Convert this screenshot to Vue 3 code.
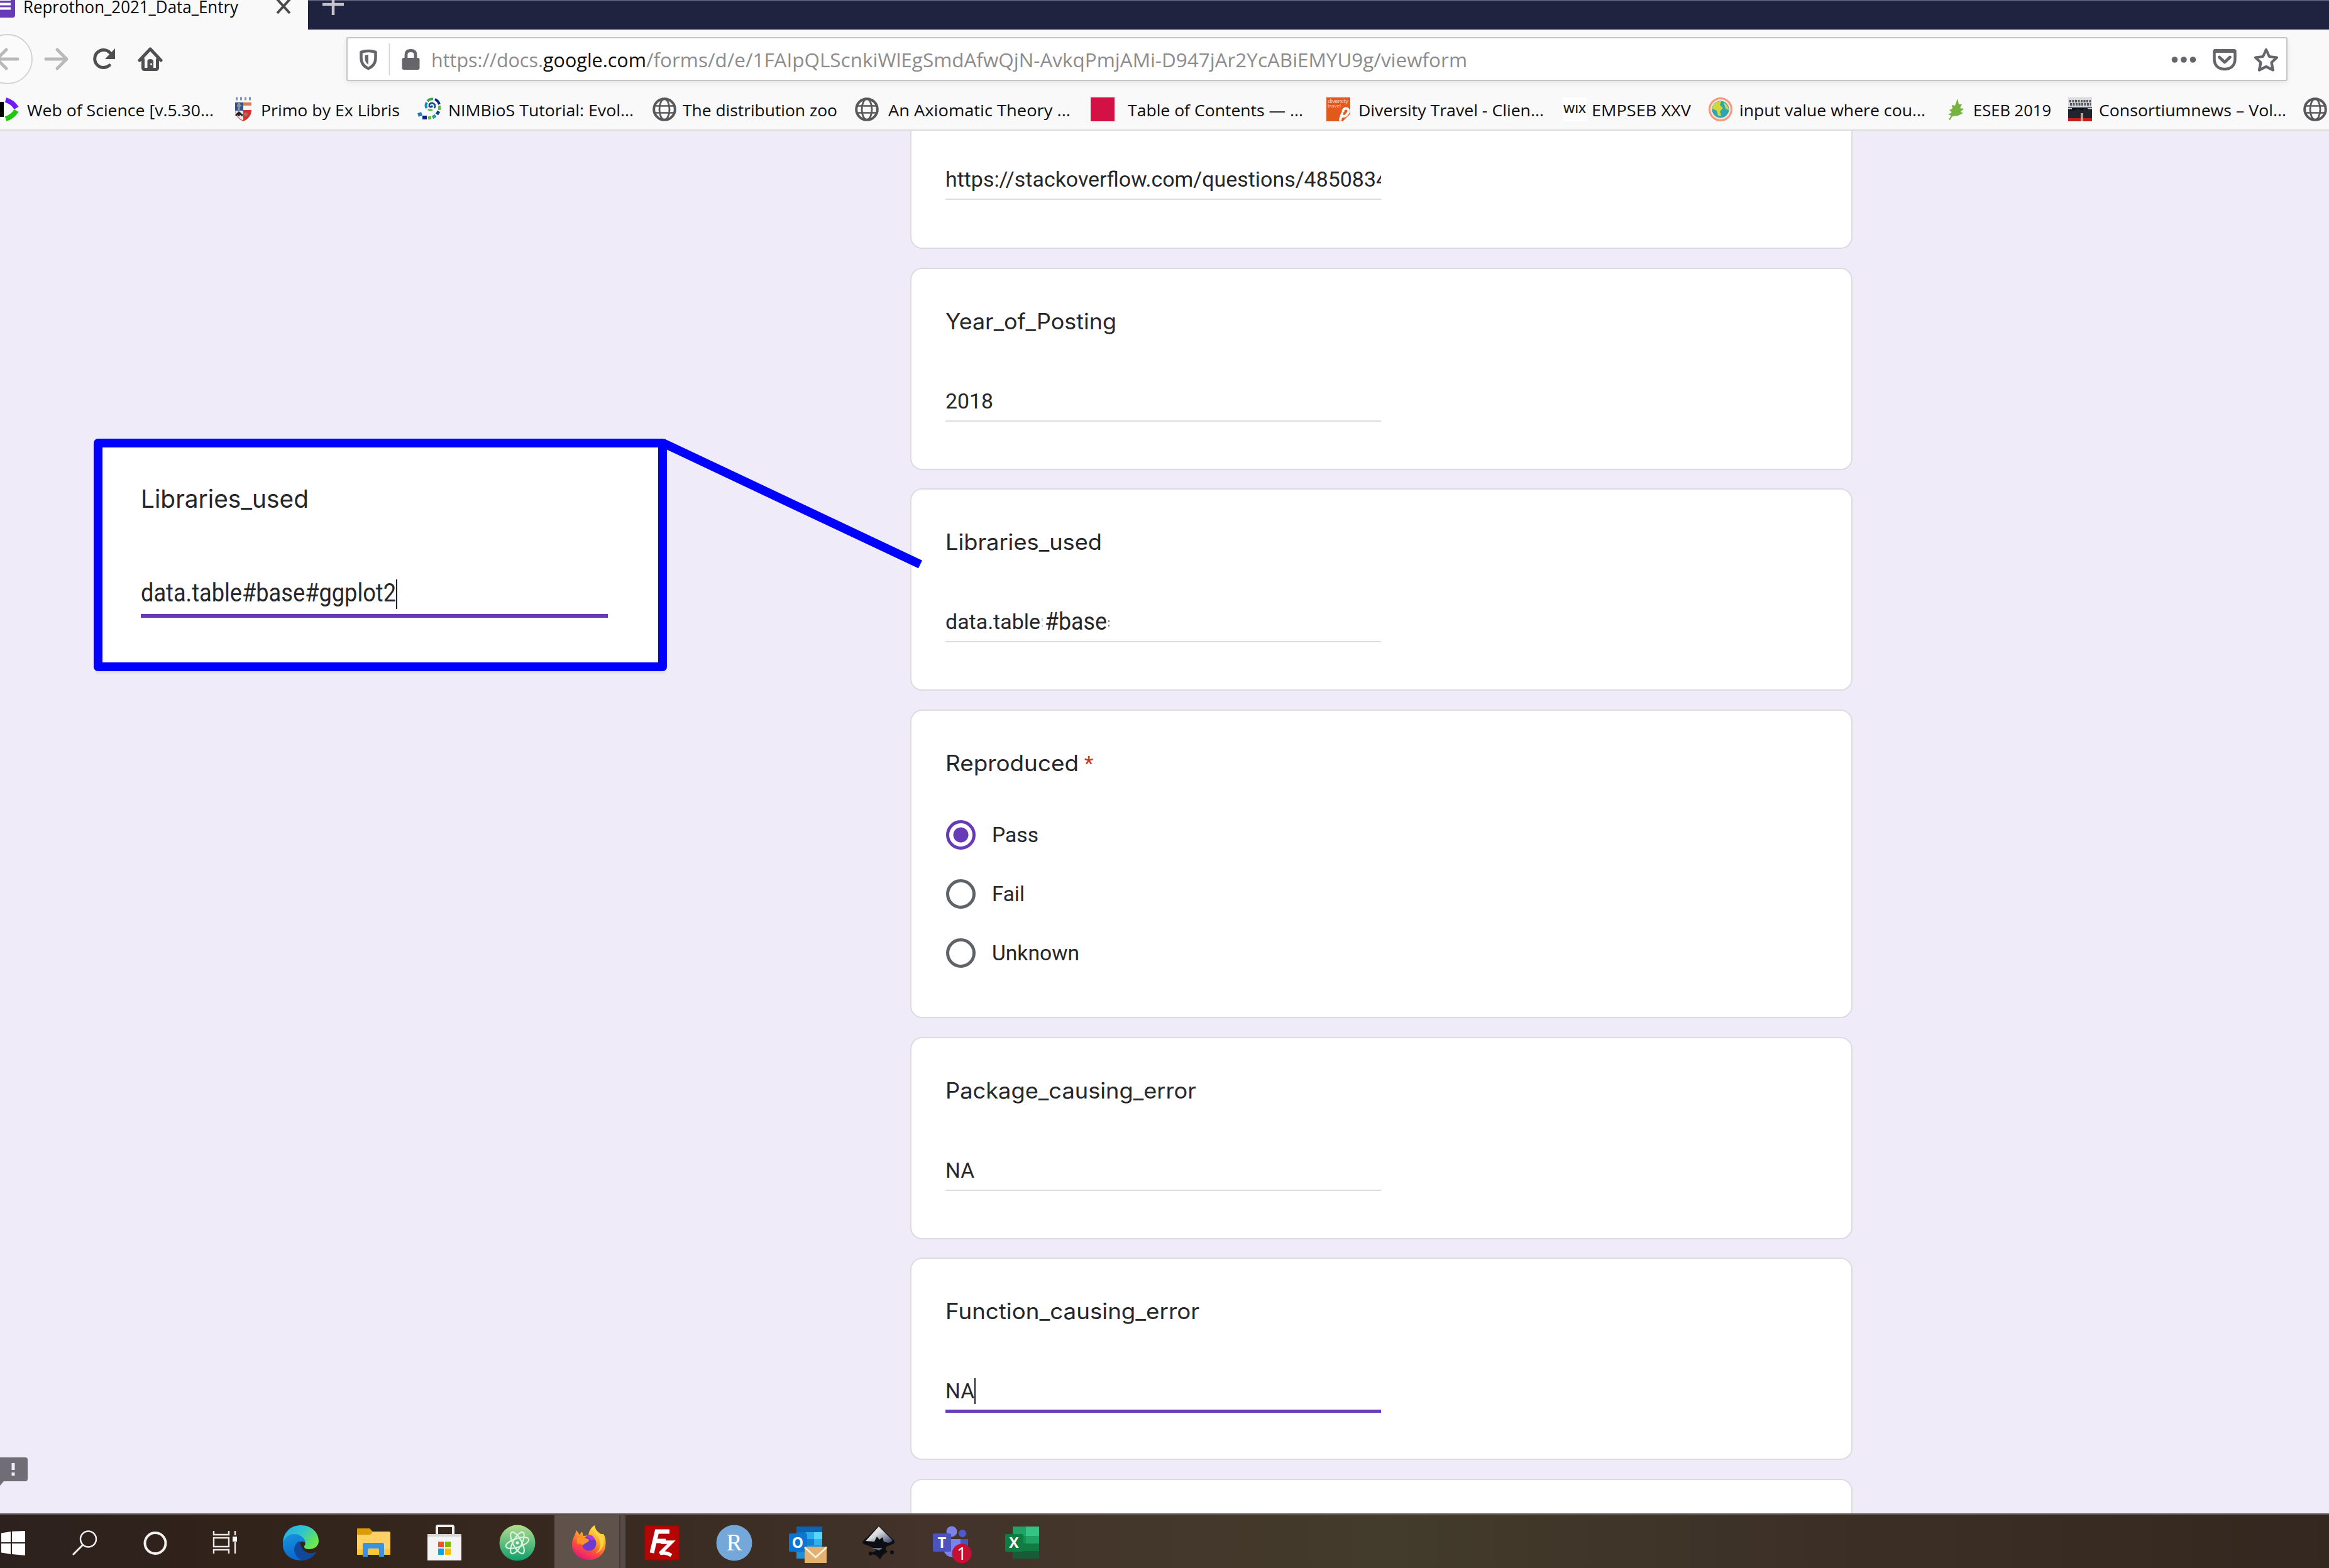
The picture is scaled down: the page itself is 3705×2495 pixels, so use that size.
<script setup>
// Stretches the inner span of a label to the width given in pixels.
const vFit = {
  mounted(el, { value }) {
    const inner = el.firstElementChild
    const natural = inner.getBoundingClientRect().width
    el.style.width = value + 'px'
    inner.style.transform = `scaleX(${value / natural})`
  }
}

const url = [
  { text: 'https://docs.', w: 178, host: false },
  { text: 'google.com', w: 164, host: true },
  { text: '/forms/d/e/1FAIpQLScnkiWlEgSmdAfwQjN-AvkqPmjAMi-D947jAr2YcABiEMYU9g/viewform', w: 1306, host: false }
]

const marks = [
  { icon: 'wos', x: -9, tx: 43, w: 297, text: 'Web of Science [v.5.30...' },
  { icon: 'crest', x: 368, tx: 415, w: 221, text: 'Primo by Ex Libris' },
  { icon: 'nimbios', x: 664, tx: 713, w: 295, text: 'NIMBioS Tutorial: Evol...' },
  { icon: 'globe', x: 1038, tx: 1086, w: 246, text: 'The distribution zoo' },
  { icon: 'globe', x: 1360, tx: 1413, w: 290, text: 'An Axiomatic Theory ...' },
  { icon: 'red', x: 1735, tx: 1794, w: 279, text: 'Table of Contents — ...' },
  { icon: 'diversity', x: 2110, tx: 2161, w: 295, text: 'Diversity Travel - Clien...' },
  { icon: 'wix', x: 2486, tx: 2532, w: 158, text: 'EMPSEB XXV' },
  { icon: 'earth', x: 2718, tx: 2767, w: 296, text: 'input value where cou...' },
  { icon: 'leaf', x: 3093, tx: 3139, w: 124, text: 'ESEB 2019' },
  { icon: 'news', x: 3290, tx: 3339, w: 298, text: 'Consortiumnews – Vol...' },
  { icon: 'globe', x: 3664, tx: 3710, w: 0, text: '' }
].map((m, i, a) => ({ ...m, cell: (a[i + 1]?.x ?? 3705) - m.x, gap: m.tx - m.x - 38 }))

const options = [
  { text: 'Pass', w: 74, on: true },
  { text: 'Fail', w: 52, on: false },
  { text: 'Unknown', w: 139, on: false }
]

const centres = [
  ['start', 21], ['search', 134.5], ['cortana', 247], ['tasks', 358], ['edge', 479],
  ['folder', 593.5], ['store', 707], ['atom', 822.5], ['firefox', 937], ['filezilla', 1053],
  ['rstudio', 1168], ['outlook', 1285], ['inkscape', 1397], ['teams', 1514], ['excel', 1626]
]
const apps = centres.map(([name, c], i) => ({
  name,
  gap: i ? c - centres[i - 1][1] - 60 : c - 30
}))
</script>

<template>
  <div class="screen">
    <header class="chrome">
      <div class="tabs">
        <div class="tab">
          <svg class="fav" width="24" height="35" viewBox="0 0 24 35">
            <path d="M0 0H24V31Q24 35 20 35H0Z" fill="#673ab7" />
            <path d="M0 6H17M0 13.500H17M0 20.500H17" stroke="#fff" stroke-width="4" />
          </svg>
          <span class="fit tabtext" v-fit="342"><span>Reprothon_2021_Data_Entry</span></span>
          <svg class="close" width="24" height="26" viewBox="0 0 24 26"><path d="M2 2L22 24M22 2L2 24" stroke="#4a4a4c" stroke-width="4" /></svg>
        </div>
        <svg class="plus" width="34" height="34" viewBox="0 0 34 34"><path d="M0 17H34M17 0V34" stroke="#c3c2ce" stroke-width="4.500" /></svg>
      </div>

      <div class="toolbar">
        <svg class="nav" width="270" height="94" viewBox="0 47 270 94" fill="none">
          <circle cx="12" cy="94" r="39" fill="#fbfbfb" stroke="#d2d2d2" stroke-width="1.800" />
          <g stroke="#b9b9ba" stroke-width="5" stroke-linejoin="round" stroke-linecap="round">
            <path d="M28 94H-4M10 79L-5 94L10 109" />
            <path d="M73 94H105M91 79L106 94L91 109" />
          </g>
          <path d="M174 104A14 14 0 1 1 175 84" stroke="#4f4f51" stroke-width="5" stroke-linecap="round" />
          <path d="M183 77V94H167Z" fill="#4f4f51" />
          <path d="M222 96L239 78L256 96" stroke="#4f4f51" stroke-width="5" stroke-linecap="round" stroke-linejoin="round" />
          <path d="M227.500 93V108Q227.500 110.500 230 110.500H248Q250.500 110.500 250.500 108V93" stroke="#4f4f51" stroke-width="5" />
          <path d="M234.500 111V97Q234.500 94 239 94T244 97V111Z" fill="#4f4f51" />
          <circle cx="240.500" cy="102" r="1.500" fill="#f9f9fa" />
        </svg>
        <div class="urlbar">
          <svg class="site" width="118" height="65" viewBox="554 61 118 65" fill="none">
            <path d="M575.500 82Q587 78 598.500 82V91C598.500 100 594 105 587 108C580 105 575.500 100 575.500 91Z" stroke="#66666a" stroke-width="4.500" stroke-linejoin="round" />
            <path d="M587 86V102C583 99 581.500 96 581.500 91V87Z" fill="#66666a" />
            <path d="M620.500 68V119" stroke="#d7d7d9" stroke-width="1.800" />
            <rect x="640.500" y="91" width="28" height="19" rx="3" fill="#66666a" />
            <path d="M647 92V86Q647 79.500 654.500 79.500T662 86V92" stroke="#66666a" stroke-width="4.800" />
          </svg>
          <div class="address">
            <span v-for="p in url" :key="p.text" class="fit" :class="{ host: p.host }" v-fit="p.w"><span>{{ p.text }}</span></span>
          </div>
          <svg class="acts" width="175" height="65" viewBox="3450 61 175 65" fill="none">
            <g fill="#66666a"><circle cx="3458.500" cy="94" r="4.800" /><circle cx="3473" cy="94" r="4.800" /><circle cx="3487.500" cy="94" r="4.800" /></g>
            <path d="M3521.500 80H3554.500V93C3554.500 104 3547 109 3538 109C3529 109 3521.500 104 3521.500 93Z" stroke="#66666a" stroke-width="4.500" stroke-linejoin="round" />
            <path d="M3521 80H3555" stroke="#66666a" stroke-width="6" />
            <path d="M3529.500 90L3538 98L3546.500 90" stroke="#66666a" stroke-width="4.800" stroke-linecap="round" stroke-linejoin="round" />
            <path d="M3604 78L3609 89L3621 90.500L3612.500 98.500L3615 110.500L3604 105L3593 110.500L3595.500 98.500L3587 90.500L3599 89Z" stroke="#66666a" stroke-width="4.200" stroke-linejoin="round" />
          </svg>
        </div>
      </div>

      <nav class="marks">
        <div v-for="(m, i) in marks" :key="i" class="mark" :style="{ width: m.cell + 'px' }">
          <svg class="mi" width="38" height="38" viewBox="0 0 38 38">
            <g v-if="m.icon === 'wos'" fill="none" stroke-width="8">
              <path d="M11 7V31" stroke="#000" />
              <path d="M18 4Q29 7 35 17" stroke="#6e1bff" />
              <path d="M18 34Q29 31 35 21" stroke="#1fc60c" />
            </g>
            <g v-else-if="m.icon === 'crest'">
              <path d="M7 2H31" stroke="#7e92c2" stroke-width="5" stroke-dasharray="3 4" />
              <path d="M6 8H32V20Q32 32 19 38Q6 32 6 20Z" fill="#d4302d" />
              <path d="M6 8H19V21H6Z" fill="#315193" /><path d="M19 8H32V13H19Z" fill="#de7a43" /><path d="M19 13H32V20H19Z" fill="#f6f4f5" />
              <path d="M6 21H19V37Q8 32 6 21Z" fill="#e8e6e7" /><path d="M7 29L12 24L18 29M12 25V30" stroke="#222" stroke-width="3" fill="none" />
              <path d="M12 9V20M9 13H16" stroke="#9c9686" stroke-width="3" /><circle cx="23" cy="27" r="3" fill="#a76b66" />
            </g>
            <g v-else-if="m.icon === 'nimbios'" fill="none" stroke-width="4">
              <path d="M1 28L7 26" stroke="#1580bd" stroke-width="6" />
              <path d="M8 32H15" stroke="#0b1f86" stroke-width="6" />
              <path d="M17 33L22 32" stroke="#63bb3f" stroke-width="5" />
              <path d="M24 32L29 29" stroke="#19a6a0" stroke-width="5" />
              <path d="M31 27L34 22" stroke="#0d3c93" stroke-width="5" />
              <path d="M35 20V13" stroke="#63bb3f" />
              <path d="M35 11Q33 5 28 3" stroke="#0b1f86" />
              <path d="M25 2.500Q19 2 16 6" stroke="#3aa64c" />
              <path d="M15 8Q12 13 15 17" stroke="#1590b8" />
              <path d="M17 19Q20 21 24 20" stroke="#63bb3f" stroke-width="3" />
              <path d="M27 17Q30 11 24 9Q18 9 19 14Q22 17 24 13" stroke="#0d4c93" stroke-width="2.800" />
            </g>
            <g v-else-if="m.icon === 'globe'" fill="none" stroke="#58585a">
              <circle cx="19" cy="19" r="16.800" stroke-width="4" />
              <ellipse cx="19" cy="19" rx="8" ry="16.500" stroke-width="2.800" />
              <path d="M4 13.500H34M4 24.500H34" stroke-width="2.600" />
            </g>
            <rect v-else-if="m.icon === 'red'" width="38" height="38" fill="#d31145" />
            <g v-else-if="m.icon === 'diversity'">
              <path d="M0 0H38V26L26 38H0Z" fill="#e2591c" />
              <text x="2" y="9" font-size="9.500" textLength="33" fill="#fbd6c3">diversity</text><text x="2" y="16" font-size="8" fill="#fbd6c3">travel</text>
              <path d="M22 37Q23 29 26 25M27 24A4.500 4.500 0 1 1 33 26Q31 31 25 30" stroke="#fff" stroke-width="4" fill="none" />
            </g>
            <g v-else-if="m.icon === 'wix'"><rect width="38" height="38" fill="#fff" /><text x="1" y="25" font-size="18" font-weight="600" textLength="36" lengthAdjust="spacingAndGlyphs" fill="#222">WIX</text></g>
            <g v-else-if="m.icon === 'earth'">
              <circle cx="19" cy="19" r="17.500" fill="#fde3d8" stroke="#f4977a" stroke-width="3" /><circle cx="19" cy="19" r="13.500" fill="#2ea5b4" />
              <path d="M7 13Q12 5 20 6L18 12L23 17L18 22L20 29L15 29L13 21L6 18Z" fill="#d0d838" /><path d="M24 8Q32 12 32 20L27 18Z" fill="#c8d645" />
            </g>
            <path v-else-if="m.icon === 'leaf'" d="M7 35L11 29L6 27L12 24L8 20L13 18L12 12L17 13L21 2L23 11L28 11L25 17L31 18L26 23L30 25L22 29L13 30L9 36Z" fill="#77b43f" />
            <g v-else-if="m.icon === 'news'">
              <rect width="38" height="38" fill="#202630" /><rect width="38" height="16" fill="#d9dadd" />
              <path d="M2 6H36M3 11H36" stroke="#55575b" stroke-width="4" stroke-dasharray="3 1.500" />
              <path d="M0 16H38V20H30L27 17L22 21L16 18L10 21H0Z" fill="#0d1018" /><path d="M0 18H6M31 18H38" stroke="#bfc3ca" stroke-width="2" />
              <rect y="33" width="38" height="5" fill="#c2201c" /><path d="M22 25V38" stroke="#b7a19d" stroke-width="4" />
            </g>
          </svg>
          <span v-if="m.text" class="fit" :style="{ marginLeft: m.gap + 'px' }" v-fit="m.w"><span>{{ m.text }}</span></span>
        </div>
      </nav>
    </header>

    <main class="page">
      <section class="card first">
        <div class="field"><span class="fit" v-fit="704"><span>https://stackoverflow.com/questions/4850834</span></span></div>
      </section>
      <section class="card">
        <h2><span class="fit" v-fit="272"><span>Year_of_Posting</span></span></h2>
        <div class="field"><span class="fit" v-fit="76"><span>2018</span></span></div>
      </section>
      <section class="card">
        <h2><span class="fit" v-fit="249"><span>Libraries_used</span></span></h2>
        <div class="field">
          <span class="fit" v-fit="151"><span>data.table</span></span><i class="sliver"></i>
          <span class="fit patch" v-fit="99"><span>#base</span></span><i class="sliver end"></i>
        </div>
      </section>
      <section class="card choice">
        <h2><span class="fit" v-fit="212"><span>Reproduced</span></span><b class="req">*</b></h2>
        <label v-for="o in options" :key="o.text" class="opt">
          <i class="radio" :class="{ on: o.on }"></i>
          <span class="fit" v-fit="o.w"><span>{{ o.text }}</span></span>
        </label>
      </section>
      <section class="card">
        <h2><span class="fit" v-fit="399"><span>Package_causing_error</span></span></h2>
        <div class="field"><span class="fit" v-fit="46"><span>NA</span></span></div>
      </section>
      <section class="card">
        <h2><span class="fit" v-fit="404"><span>Function_causing_error</span></span></h2>
        <div class="field focus"><span class="fit" v-fit="46"><span>NA</span></span><i class="caret"></i></div>
      </section>
      <section class="card"></section>

      <svg class="report" width="46" height="48" viewBox="0 0 46 48">
        <path d="M0 0H40Q44 0 44 4V34Q44 38 40 38H6L0 45Z" fill="#716d77" />
        <path d="M21 9V20M21 24V29" stroke="#efebf8" stroke-width="5" />
      </svg>
    </main>

    <svg class="link" width="440" height="230" viewBox="1040 690 440 230"><path d="M1054 704.500L1464 898" stroke="#0000fe" stroke-width="14" /></svg>
    <aside class="callout">
      <h3><span class="fit" v-fit="267"><span>Libraries_used</span></span></h3>
      <div class="zoomed"><span class="fit" v-fit="406"><span>data.table#base#ggplot2</span></span><i class="caret"></i></div>
    </aside>

    <footer class="taskbar">
      <div v-for="a in apps" :key="a.name" class="app" :class="{ active: a.name === 'firefox' }" :style="{ marginLeft: a.gap + 'px' }">
        <svg width="60" height="60" viewBox="0 0 60 60">
          <g v-if="a.name === 'start'" fill="#fff">
            <path d="M11 14.500L26 12V29H11ZM28 11.700L49 11V29H28ZM11 31H26V48L11 45.500ZM28 31H49V50L28 48Z" />
          </g>
          <g v-else-if="a.name === 'search'" fill="none" stroke="#f0eeed" stroke-width="2.500">
            <circle cx="35.500" cy="24" r="12.500" /><path d="M27 33L11 49" stroke-width="3" />
          </g>
          <circle v-else-if="a.name === 'cortana'" cx="30" cy="30.500" r="16.500" fill="none" stroke="#f3f1f0" stroke-width="4" />
          <g v-else-if="a.name === 'tasks'" fill="none" stroke="#ebe8e7" stroke-width="2.400">
            <path d="M12 11V17H36V11M12 47V41H36V47M12 22H36V36H12ZM46 11V18M46 29V47" /><path d="M42 20H49V28H42Z" fill="#fff" stroke="none" />
          </g>
          <g v-else-if="a.name === 'edge'">
            <defs>
              <linearGradient id="eg" x1="0" y1="0" x2="1" y2=".6"><stop offset="0" stop-color="#27a8ee" /><stop offset=".5" stop-color="#2fc3cf" /><stop offset="1" stop-color="#6ce84b" /></linearGradient>
              <linearGradient id="eb" x1="0" y1="0" x2=".3" y2="1"><stop offset="0" stop-color="#1a94e0" /><stop offset="1" stop-color="#0768cd" /></linearGradient>
            </defs>
            <path d="M1 30C2 12 14 2 30 2C48 2 58 15 58 27C58 36 50 40 43 40C37 40 34 38 35 35C38 32 37 26 31 22C22 15 6 18 1 30Z" fill="url(#eg)" />
            <path d="M1 31C5 14 23 13 31 20C36 24 37 28 37 31C36 26 24 27 24 36C24 47 35 55 45 52C40 57 34 58 30 58C13 58 0 47 1 31Z" fill="url(#eb)" />
            <path d="M27 27C17 33 15 48 30 57C40 60 52 51 54 44C46 49 36 46 32 39C29 35 29 31 27 27Z" fill="#10499c" />
          </g>
          <g v-else-if="a.name === 'folder'">
            <path d="M4 8Q4 7 5 7H24L29 12L25 18H4Z" fill="#dd9b05" /><path d="M4 17H25L29 12H55Q57 12 57 14V49H4Z" fill="#ffd064" />
            <path d="M4 40H57V49H4Z" fill="#fcc638" /><path d="M13 52V33Q13 30 16 30H44Q47 30 47 33V52H39V41Q39 39 37 39H23Q21 39 21 41V52Z" fill="#3a93dc" />
          </g>
          <g v-else-if="a.name === 'store'">
            <path d="M18 20V5Q18 3 20 3H42Q44 3 44 5V20" fill="none" stroke="#efefef" stroke-width="4" />
            <path d="M3 16H57V58H3Z" fill="#f4f4f5" /><path d="M3 16H57V20H3Z" fill="#d6d6d8" />
            <path d="M20 28H29V37H20Z" fill="#f25022" /><path d="M31 28H40V37H31Z" fill="#7fba00" /><path d="M20 39H29V49H20Z" fill="#00a4ef" /><path d="M31 39H40V49H31Z" fill="#ffb900" />
          </g>
          <g v-else-if="a.name === 'atom'">
            <defs><linearGradient id="at" x1="0" y1="0" x2="0" y2="1"><stop offset="0" stop-color="#b2dc8e" /><stop offset="1" stop-color="#0f9f6c" /></linearGradient></defs>
            <circle cx="30" cy="30" r="28.500" fill="url(#at)" />
            <g fill="none" stroke="#d9f2df" stroke-width="2.200"><ellipse cx="30" cy="30" rx="19" ry="7" transform="rotate(-18 30 30)" /><ellipse cx="30" cy="30" rx="19" ry="7" transform="rotate(62 30 30)" /><ellipse cx="30" cy="30" rx="19" ry="7" transform="rotate(118 30 30)" /></g>
            <circle cx="30" cy="30" r="2.500" fill="#e8f7eb" />
          </g>
          <g v-else-if="a.name === 'firefox'">
            <defs><linearGradient id="ff" x1=".8" y1="0" x2=".3" y2="1"><stop offset="0" stop-color="#fff24a" /><stop offset=".4" stop-color="#ffa52a" /><stop offset=".7" stop-color="#ff4b3c" /><stop offset="1" stop-color="#e21582" /></linearGradient></defs>
            <path d="M3 33C3 23 8 18 10 10L15 17L19 12L21 19L29 18C30 10 34 5 39 2C40 10 45 13 49 16L53 16C57 22 57 29 56 36C54 49 43 57 30 57C15 57 3 47 3 33Z" fill="url(#ff)" />
            <circle cx="30" cy="31" r="11.500" fill="#6d3bd1" />
            <path d="M25 19Q35 14 39 24L34 26Z" fill="#a83be2" /><path d="M11 22C17 18 24 22 30 25C30 30 24 29 20 34Q15 29 11 32Z" fill="#ff9327" />
            <path d="M38 5C38 16 48 21 48 32C48 41 43 45 40 47C50 44 56 33 52 19C49 17 42 14 38 5Z" fill="#ffd33b" />
          </g>
          <g v-else-if="a.name === 'filezilla'">
            <rect x="3" y="3" width="54" height="54" fill="#b50505" stroke="#a80404" stroke-width="2.500" stroke-dasharray="3 2" />
            <path d="M14 46L22 12H42M18 27H36" fill="none" stroke="#fff" stroke-width="7" /><path d="M28 29H45L27 47Q36 44 45 50" fill="none" stroke="#fff" stroke-width="5.500" />
          </g>
          <g v-else-if="a.name === 'rstudio'"><circle cx="30" cy="30" r="28.500" fill="#74a8da" /><text x="30" y="42" text-anchor="middle" class="serif" font-size="37" fill="#fff">R</text></g>
          <g v-else-if="a.name === 'outlook'">
            <path d="M12 4H53V55H12Z" fill="#0a63b5" /><path d="M12 13H27V33H12Z" fill="#0f72c4" /><path d="M27 13H40V24H27Z" fill="#2cabea" /><path d="M40 13H53V24H40Z" fill="#54d8ff" /><path d="M27 24H40V34H27Z" fill="#1180d2" /><path d="M40 24H53V34H40Z" fill="#2fb1ed" />
            <path d="M12 34H53V55H12Z" fill="#1b91dd" /><rect y="15" width="29" height="29" rx="2" fill="#0b75d1" /><text x="14" y="38" text-anchor="middle" font-size="23" font-weight="700" fill="#fff">O</text>
            <path d="M25 36H60V62H25Z" fill="#e5b173" /><path d="M25 37L42.500 53L60 37" fill="none" stroke="#fff5e5" stroke-width="2.500" />
          </g>
          <g v-else-if="a.name === 'inkscape'">
            <defs><linearGradient id="ink" x1="0" y1="0" x2="1" y2="1"><stop offset="0" stop-color="#fff" /><stop offset=".45" stop-color="#d7d9dc" /><stop offset="1" stop-color="#324067" /></linearGradient></defs>
            <path d="M31 3L55 26Q58 30 53 32L43 36Q40 41 45 44L38 49L33 56L27 50L18 47L27 42Q21 36 10 33Q3 31 6 27Z" fill="#0d0e13" />
            <path d="M31 4L52 25Q54 28 46 30L39 28L37 21L32 25L28 20L24 28L10 27Z" fill="url(#ink)" /><path d="M19 38H37L32 42Z" fill="#697184" /><circle cx="52" cy="45" r="3" fill="#0d0e13" /><circle cx="18" cy="47" r="3" fill="#0d0e13" />
          </g>
          <g v-else-if="a.name === 'teams'">
            <circle cx="30" cy="12" r="8.500" fill="#7b83eb" /><circle cx="47" cy="15" r="6" fill="#5059c9" />
            <path d="M40 24H56V40Q52 46 44 44Z" fill="#4b53bc" /><path d="M17 24H44V40Q44 53 31 53Q20 52 17 42Z" fill="#7b83eb" />
            <rect y="15" width="29" height="29" rx="2" fill="#4c53bf" /><text x="14.500" y="38" text-anchor="middle" font-size="23" font-weight="700" fill="#fff">T</text>
            <circle cx="46" cy="47" r="15.500" fill="#c50f33" /><text x="46" y="57" text-anchor="middle" font-size="28" fill="#fff">1</text>
          </g>
          <g v-else-if="a.name === 'excel'">
            <path d="M15 4H36V19H15Z" fill="#21a366" /><path d="M36 4H57V19H36Z" fill="#33c481" /><path d="M15 19H36V31H15Z" fill="#179154" /><path d="M36 19H57V31H36Z" fill="#21a366" /><path d="M15 31H57V43H15Z" fill="#107c41" /><path d="M15 43H57V55H15Z" fill="#185c37" />
            <rect x="3" y="16" width="29" height="28" rx="2" fill="#107c41" /><text x="17" y="38" text-anchor="middle" font-size="23" font-weight="700" fill="#fff">X</text>
          </g>
        </svg>
      </div>
    </footer>
  </div>
</template>

<style>
body { margin: 0; overflow: hidden; }
</style>

<style scoped>
.screen { position: relative; width: 3705px; height: 2495px; overflow: hidden; display: flex; flex-direction: column; background: #efebf8; font-family: "Open Sans", "Noto Sans", sans-serif; }
.fit { display: inline-block; flex: none; white-space: nowrap; }
.fit > span { display: inline-block; transform-origin: 0 50%; }
svg { display: block; flex: none; overflow: visible; }

.chrome { flex: none; height: 206px; display: flex; flex-direction: column; background: #f9f9fa; border-bottom: 2px solid #dcdcdf; color: #0c0c0d; }
.tabs { flex: none; height: 47px; display: flex; background: #202340; box-shadow: inset 0 1px #70708a; }
.tab { width: 490px; display: flex; background: #f9f9fa; font-size: 27px; line-height: 38px; }
.fav { margin-top: -7px; }
.tabtext { margin: -8px 60px 0 13px; }
.close { margin-top: -3px; }
.plus { margin: -10px 0 0 23px; }

.toolbar { flex: none; height: 94px; display: flex; }
.urlbar { box-sizing: border-box; width: 3088px; height: 70px; margin: 12px 0 0 281px; display: flex; align-items: center; background: #fff; border: 2px solid #c5c5c7; border-radius: 3px; box-shadow: 0 3px 10px rgba(0, 0, 0, .08); }
.address { display: flex; margin: 2px auto 0 15px; font-size: 31px; line-height: 42px; color: #8c8c8e; }
.address .host { color: #0c0c0d; }
.acts { margin-right: 11px; }

.marks { display: flex; height: 65px; align-items: center; margin-left: -9px; font-size: 26px; line-height: 36px; }
.mark { flex: none; display: flex; align-items: center; }
.mark .fit { margin-top: 2px; }

.page { position: relative; flex: none; height: 2200px; overflow: hidden; font-family: Roboto, sans-serif; color: #26272a; }
.card { box-sizing: border-box; width: 1499px; height: 322px; margin: 0 0 29.500px 1448px; padding: 60px 0 0 54px; background: #fff; border: 2px solid #dadce0; border-radius: 19px; }
.card.first { height: 188px; padding-top: 52px; border-top: 0; border-radius: 0 0 19px 19px; }
.card.choice { height: 491.500px; }
h2 { display: flex; height: 46px; margin: 0; font: 400 35px/46px Inter, sans-serif; }
.field { width: 693px; height: 56px; margin-top: 79px; display: flex; border-bottom: 2.500px solid #dcdcde; overflow: hidden; font-size: 32.800px; line-height: 53px; }
.first .field { margin-top: 0; }
.field.focus { border-bottom: 5px solid #673ab7; height: 55px; overflow: visible; }
.caret { width: 2px; height: 41px; background: #202124; }
.field .caret { margin-top: 5px; }
.sliver { width: 2px; height: 17px; margin: 20px 0 0 2px; background: repeating-linear-gradient(#bcd0e6 0 4px, #fff 4px 10px); }
.sliver.end { height: 10px; margin: 23px 0 0 2px; background: repeating-linear-gradient(#8a807a 0 3px, #fff 3px 7px); }
.patch { margin-left: 3px; font-size: 38px; line-height: 50px; }
.req { margin-left: 9px; color: #d93025; font-size: 32px; font-weight: 500; font-family: Roboto, sans-serif; }
.opt { display: flex; align-items: center; height: 94px; font-size: 32.800px; }
h2 + .opt { margin-top: 45px; }
.radio { box-sizing: border-box; width: 47px; height: 47px; margin: 0 26px 0 1px; border: 5px solid #5f6368; border-radius: 50%; }
.radio.on { border-color: #673ab7; background: radial-gradient(circle, #673ab7 11.500px, #fff 12.500px); }
.report { position: absolute; left: 0; top: 2111px; }

.link { position: absolute; left: 1040px; top: 690px; }
.callout { position: absolute; left: 149px; top: 698px; box-sizing: border-box; width: 912px; height: 370px; padding: 55px 0 0 61px; background: #fff; border: 14px solid #0000fe; border-radius: 7px; box-shadow: 0 5px 0 -1px #e3e2e8; font-family: Roboto, sans-serif; color: #26272a; }
h3 { margin: 0; height: 54px; font: 400 40px/54px Inter, sans-serif; }
.zoomed { display: flex; width: 743px; height: 68px; margin-top: 88px; border-bottom: 6px solid #673ab7; font-size: 40px; line-height: 70px; }
.zoomed .caret { height: 47px; margin-top: 13px; }

.taskbar { position: absolute; left: 0; top: 2408px; width: 3705px; height: 87px; display: flex; align-items: center; box-sizing: border-box; border-top: 2px solid #6d6463; background: linear-gradient(90deg, #2c211e 0, #32231a 400px, #37291f 900px, #43332a 1500px, #433b2b 2200px, #3c3026 2900px, #33271f); }
.app { position: relative; flex: none; width: 60px; height: 60px; margin-top: 4px; }
.app svg { position: relative; }
.app.active::before { content: ""; position: absolute; left: -25px; top: -14px; width: 113px; height: 87px; background: linear-gradient(90deg, #5e524b 103px, #443b36 103px 105px, #564b44 105px); }
.serif { font-family: "Liberation Serif", serif; }
</style>
